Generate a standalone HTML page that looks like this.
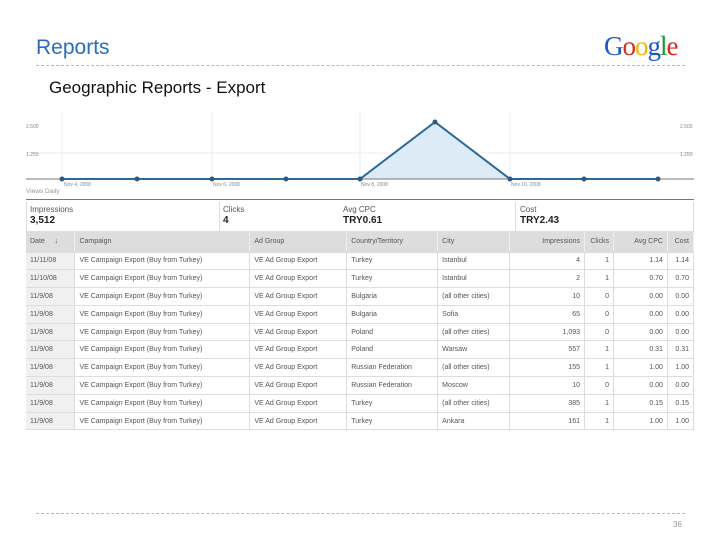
<!DOCTYPE html>
<html><head><meta charset="utf-8"><style>
*{margin:0;padding:0;box-sizing:border-box}
body{width:720px;height:540px;background:#fff;position:relative;overflow:hidden;font-family:"Liberation Sans",Arial,sans-serif}
.a{position:absolute}
.dash{position:absolute;left:36px;width:649px;border-top:1px dashed #bbb}
table{position:absolute;left:26px;top:232px;width:668px;border-collapse:collapse;font-size:7px;color:#555}
td{height:17.8px;border-bottom:1px solid #ddd;border-right:1px solid #ddd;padding:0 4px;white-space:nowrap;overflow:hidden}
tr.h td{background:#ddd;height:20px;border-right:1px solid #eee}
td.d{background:#f0f0f0}
.r{text-align:right}
.st{position:absolute;top:202px;height:30px;font-size:8px;color:#555;padding:3px 0 0 2px}
.st b{display:block;font-size:10px;color:#222;margin-top:1px}
</style></head><body>
<div class="a" style="left:36px;top:36px;font-size:21px;color:#2a6ebb">Reports</div>
<div class="dash" style="top:65px"></div>
<div class="a" style="left:49px;top:78px;font-size:17px;color:#111">Geographic Reports - Export</div>
<div class="a" style="left:604px;top:31px;font-family:'Liberation Serif',serif;font-size:27px;letter-spacing:-1px"><span style="color:#1a55c9">G</span><span style="color:#d62c1a">o</span><span style="color:#f3b800">o</span><span style="color:#1a55c9">g</span><span style="color:#189a2f">l</span><span style="color:#d62c1a">e</span></div>
<svg class="a" style="left:0;top:0" width="720" height="200">
<g stroke="#eee" stroke-width="1"><line x1="62" y1="112" x2="62" y2="179"/><line x1="212" y1="112" x2="212" y2="179"/><line x1="360" y1="112" x2="360" y2="179"/><line x1="510" y1="112" x2="510" y2="179"/><line x1="26" y1="153" x2="694" y2="153"/></g>
<polygon points="360,179 435,122 510,179" fill="#dcebf5"/>
<line x1="26" y1="179" x2="694" y2="179" stroke="#777" stroke-width="1"/>
<polyline points="62,179 360,179 435,122 510,179 658,179" fill="none" stroke="#2a6a9a" stroke-width="2"/>
<g fill="#2a5a85"><circle cx="62" cy="179" r="2.5"/><circle cx="137" cy="179" r="2.5"/><circle cx="212" cy="179" r="2.5"/><circle cx="286" cy="179" r="2.5"/><circle cx="360" cy="179" r="2.5"/><circle cx="435" cy="122" r="2.5"/><circle cx="510" cy="179" r="2.5"/><circle cx="584" cy="179" r="2.5"/><circle cx="658" cy="179" r="2.5"/></g>
<g font-size="5" fill="#888" font-family="Liberation Sans"><text x="26" y="128">2.500</text><text x="26" y="156">1.250</text><text x="680" y="128">2.500</text><text x="680" y="156">1.250</text>
<text x="64" y="186">Nov 4, 2008</text><text x="213" y="186">Nov 6, 2008</text><text x="361" y="186">Nov 8, 2008</text><text x="511" y="186">Nov 10, 2008</text></g>
<text x="26" y="193" font-size="6.5" fill="#999" font-family="Liberation Sans">Views Daily</text>
<rect x="26" y="199" width="668" height="3" fill="#777"/>
</svg>
<div class="a" style="left:26px;top:202px;width:668px;height:30px;border:1px solid #ddd;border-top:0"></div>
<div class="a" style="left:219px;top:202px;height:30px;border-left:1px solid #ddd"></div>
<div class="a" style="left:515px;top:202px;height:30px;border-left:1px solid #ddd"></div>
<div class="st" style="left:28px">Impressions<b>3,512</b></div>
<div class="st" style="left:221px">Clicks<b>4</b></div>
<div class="st" style="left:341px">Avg CPC<b>TRY0.61</b></div>
<div class="st" style="left:518px">Cost<b>TRY2.43</b></div>
<table>
<colgroup><col style="width:49px"><col style="width:175px"><col style="width:97px"><col style="width:91px"><col style="width:72px"><col style="width:75px"><col style="width:29px"><col style="width:54px"><col style="width:26px"></colgroup>
<tr class="h"><td>Date &nbsp; &nbsp; ↓</td><td>Campaign</td><td>Ad Group</td><td>Country/Territory</td><td>City</td><td class="r">Impressions</td><td class="r">Clicks</td><td class="r">Avg CPC</td><td class="r">Cost</td></tr>
<tr><td class="d">11/11/08</td><td>VE Campaign Export (Buy from Turkey)</td><td>VE Ad Group Export</td><td>Turkey</td><td>Istanbul</td><td class="r">4</td><td class="r">1</td><td class="r">1.14</td><td class="r">1.14</td></tr>
<tr><td class="d">11/10/08</td><td>VE Campaign Export (Buy from Turkey)</td><td>VE Ad Group Export</td><td>Turkey</td><td>Istanbul</td><td class="r">2</td><td class="r">1</td><td class="r">0.70</td><td class="r">0.70</td></tr>
<tr><td class="d">11/9/08</td><td>VE Campaign Export (Buy from Turkey)</td><td>VE Ad Group Export</td><td>Bulgaria</td><td>(all other cities)</td><td class="r">10</td><td class="r">0</td><td class="r">0.00</td><td class="r">0.00</td></tr>
<tr><td class="d">11/9/08</td><td>VE Campaign Export (Buy from Turkey)</td><td>VE Ad Group Export</td><td>Bulgaria</td><td>Sofia</td><td class="r">65</td><td class="r">0</td><td class="r">0.00</td><td class="r">0.00</td></tr>
<tr><td class="d">11/9/08</td><td>VE Campaign Export (Buy from Turkey)</td><td>VE Ad Group Export</td><td>Poland</td><td>(all other cities)</td><td class="r">1,093</td><td class="r">0</td><td class="r">0.00</td><td class="r">0.00</td></tr>
<tr><td class="d">11/9/08</td><td>VE Campaign Export (Buy from Turkey)</td><td>VE Ad Group Export</td><td>Poland</td><td>Warsaw</td><td class="r">557</td><td class="r">1</td><td class="r">0.31</td><td class="r">0.31</td></tr>
<tr><td class="d">11/9/08</td><td>VE Campaign Export (Buy from Turkey)</td><td>VE Ad Group Export</td><td>Russian Federation</td><td>(all other cities)</td><td class="r">155</td><td class="r">1</td><td class="r">1.00</td><td class="r">1.00</td></tr>
<tr><td class="d">11/9/08</td><td>VE Campaign Export (Buy from Turkey)</td><td>VE Ad Group Export</td><td>Russian Federation</td><td>Moscow</td><td class="r">10</td><td class="r">0</td><td class="r">0.00</td><td class="r">0.00</td></tr>
<tr><td class="d">11/9/08</td><td>VE Campaign Export (Buy from Turkey)</td><td>VE Ad Group Export</td><td>Turkey</td><td>(all other cities)</td><td class="r">385</td><td class="r">1</td><td class="r">0.15</td><td class="r">0.15</td></tr>
<tr><td class="d">11/9/08</td><td>VE Campaign Export (Buy from Turkey)</td><td>VE Ad Group Export</td><td>Turkey</td><td>Ankara</td><td class="r">161</td><td class="r">1</td><td class="r">1.00</td><td class="r">1.00</td></tr>
</table>
<div class="dash" style="top:513px"></div>
<div class="a" style="left:673px;top:520px;font-size:8px;color:#999">36</div>
</body></html>
